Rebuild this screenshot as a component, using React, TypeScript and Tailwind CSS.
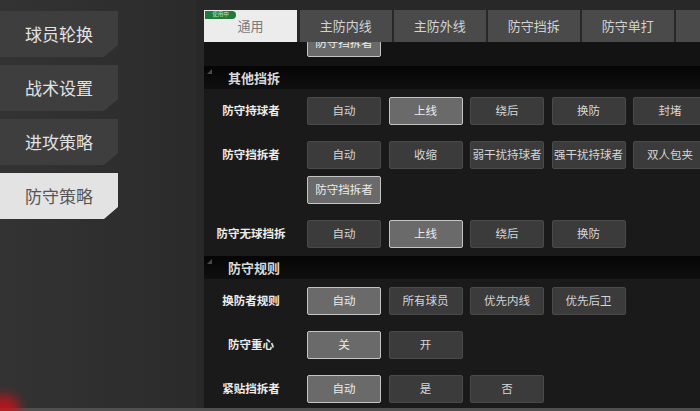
import React from "react";

const font = { fontFamily: '"Noto Sans CJK SC", "Noto Sans", sans-serif' };

type Opt = { t: string; on?: boolean };

function Btn({ t, on }: Opt) {
  return (
    <div
      className={
        on
          ? "w-[74px] h-[28px] shrink-0 flex items-center justify-center rounded-[2px] bg-[#6a6a6a] border-[1.5px] border-[#c4c4c4] text-[#ececec] text-[11.5px] leading-none whitespace-nowrap"
          : "w-[74px] h-[28px] shrink-0 flex items-center justify-center rounded-[2px] bg-[#3b3b3b] border border-[#4a4a4a] text-[#d6d6d6] text-[11.5px] leading-none whitespace-nowrap"
      }
    >
      {t}
    </div>
  );
}

function Row({ label, opts }: { label: string; opts: Opt[] }) {
  return (
    <div className="flex items-start py-[8px] bg-[#1a1a1a]">
      <div className="w-[94px] h-[28px] shrink-0 flex items-center justify-center text-[11.5px] font-bold text-[#ececec] whitespace-nowrap">
        {label}
      </div>
      <div className="ml-[9px] w-[420px] shrink-0 flex flex-wrap gap-x-[7.5px] gap-y-[7px]">
        {opts.map((o, i) => (
          <Btn key={i} {...o} />
        ))}
      </div>
    </div>
  );
}

function Section({ title }: { title: string }) {
  return (
    <div className="relative h-[23px] flex items-center bg-gradient-to-b from-[#050505] to-[#101010]">
      <div className="absolute left-[3px] top-[3px] w-0 h-0 border-t-[5px] border-t-transparent border-r-[5px] border-r-[#4a4a4a]" />
      <div className="ml-[24px] text-[13px] font-bold text-[#d8d8d8]">{title}</div>
    </div>
  );
}

const menu = ["球员轮换", "战术设置", "进攻策略", "防守策略"];
const tabs = ["主防内线", "主防外线", "防守挡拆", "防守单打"];

export default function App() {
  return (
    <div
      className="relative w-[700px] h-[411px] overflow-hidden bg-[#2d2d2d] flex flex-col"
      style={font}
    >
      <div className="flex flex-1 min-h-0">
        {/* Sidebar */}
        <div className="w-[196px] shrink-0 pt-[11px] flex flex-col gap-[8px] bg-gradient-to-r from-[#333333] to-[#2b2b2b]">
          {menu.map((m, i) => (
            <div
              key={m}
              className={
                i === 3
                  ? "w-[118px] h-[46px] flex items-center justify-center bg-[#e3e3e3] text-[#555555] text-[17px] [clip-path:polygon(0_0,100%_0,100%_74%,calc(100%-14px)_100%,0_100%)]"
                  : "w-[118px] h-[46px] flex items-center justify-center bg-[#3e3e3e] text-[#e2e2e2] text-[17px] [clip-path:polygon(0_0,100%_0,100%_74%,calc(100%-14px)_100%,0_100%)]"
              }
            >
              {m}
            </div>
          ))}
        </div>

        {/* Main */}
        <div className="flex-1 min-w-0 flex flex-col bg-[#282828] pl-[8px] pt-[10px]">
          {/* Tabs */}
          <div className="h-[32px] shrink-0 flex gap-[2.5px]">
            <div className="relative w-[93px] shrink-0 mr-[0.5px] flex items-center justify-center bg-[#ececec] text-[#7a7a7a] text-[13px]">
              <div className="absolute left-[1px] top-[1px] h-[8px] w-[31px] rounded-r-full rounded-l-[2px] bg-[#1f7a3c] flex items-center justify-center text-[5.5px] leading-none text-[#bfe8c8]">
                使用中
              </div>
              通用
            </div>
            {tabs.map((t) => (
              <div
                key={t}
                className="w-[91.5px] shrink-0 flex items-center justify-center bg-[#4a4a4a] text-[#d2d2d2] text-[13px]"
              >
                {t}
              </div>
            ))}
            <div className="w-[40px] shrink-0 bg-[#4a4a4a]" />
          </div>

          {/* Content */}
          <div className="flex-1 min-h-0 overflow-hidden bg-[#131313]">
            <div className="-mt-[13px]">
              <div className="flex items-start pb-[9px]">
                <div className="w-[94px] h-[28px] shrink-0" />
                <div className="ml-[9px]">
                  <Btn t="防守挡拆者" on />
                </div>
              </div>
              <Section title="其他挡拆" />
              <Row
                label="防守持球者"
                opts={[
                  { t: "自动" },
                  { t: "上线", on: true },
                  { t: "绕后" },
                  { t: "换防" },
                  { t: "封堵" },
                ]}
              />
              <Row
                label="防守挡拆者"
                opts={[
                  { t: "自动" },
                  { t: "收缩" },
                  { t: "弱干扰持球者" },
                  { t: "强干扰持球者" },
                  { t: "双人包夹" },
                  { t: "防守挡拆者", on: true },
                ]}
              />
              <Row
                label="防守无球挡拆"
                opts={[
                  { t: "自动" },
                  { t: "上线", on: true },
                  { t: "绕后" },
                  { t: "换防" },
                ]}
              />
              <Section title="防守规则" />
              <Row
                label="换防者规则"
                opts={[
                  { t: "自动", on: true },
                  { t: "所有球员" },
                  { t: "优先内线" },
                  { t: "优先后卫" },
                ]}
              />
              <Row label="防守重心" opts={[{ t: "关", on: true }, { t: "开" }]} />
              <Row
                label="紧贴挡拆者"
                opts={[{ t: "自动", on: true }, { t: "是" }, { t: "否" }]}
              />
            </div>
          </div>
        </div>
      </div>
      <div className="h-[3px] shrink-0 bg-[#505050]" />
      <div className="absolute -left-[14px] bottom-[-14px] w-[34px] h-[30px] rounded-full bg-[#d0101a] blur-[6px] opacity-80" />
    </div>
  );
}
